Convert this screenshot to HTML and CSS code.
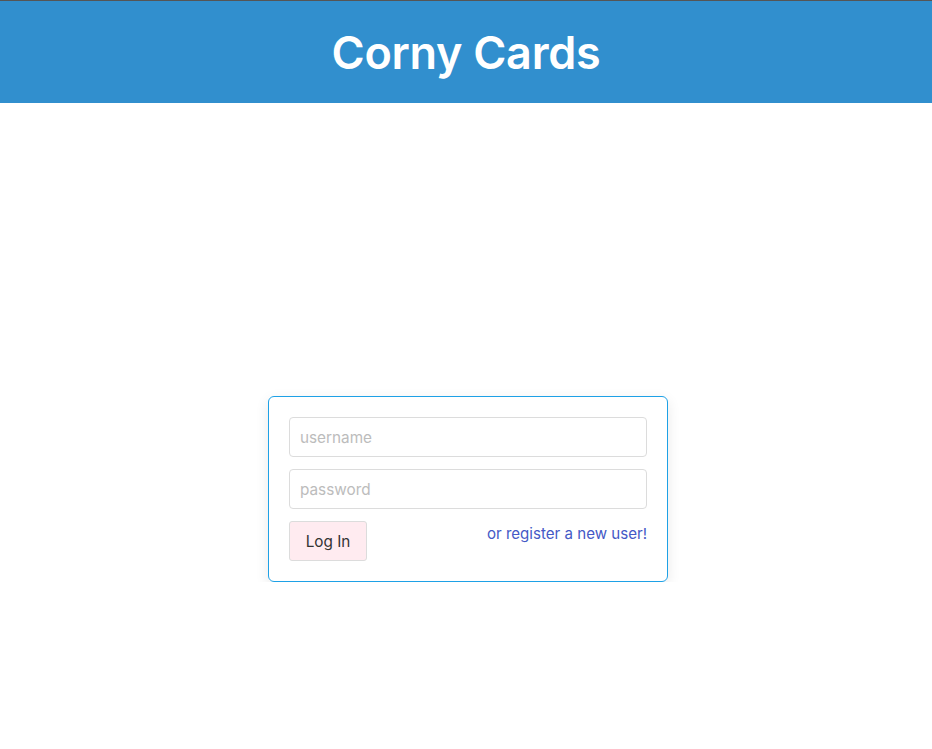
FILE: index.html
```html
<!DOCTYPE html>
<html>
<head>
<meta charset="utf-8">
<link rel="stylesheet" href="styles.css">
</head>
<body>
<header class="header">
  <h1 class="title">Corny Cards</h1>
</header>
<main class="main">
  <form class="card">
    <input class="field" type="text" placeholder="username">
    <input class="field" type="password" placeholder="password">
    <div class="actions">
      <button class="btn" type="button">Log In</button>
      <a class="link" href="#">or register a new user!</a>
    </div>
  </form>
</main>
</body>
</html>
```
FILE: styles.css
```css
* { box-sizing: border-box; }
html, body { margin: 0; padding: 0; background: #fff; }
body { font-family: Inter, Roboto, sans-serif; font-size: 16px; }
.header {
  background: #318fce;
  border-top: 1px solid #555;
  height: 103px;
  display: flex;
  align-items: center;
  justify-content: center;
}
.title {
  margin: 0;
  color: #fff;
  font-family: Inter, sans-serif;
  font-weight: 600;
  font-size: 45px;
  letter-spacing: -0.3px;
}
.main {
  display: flex;
  justify-content: center;
  padding-top: 293px;
  padding-left: 4px;
}
.card {
  width: 400px;
  border: 1px solid #1ea1e6;
  border-radius: 6px;
  padding: 20px;
  box-shadow: 0 4px 14px rgba(0,0,0,0.09);
  display: flex;
  flex-direction: column;
  gap: 12px;
}
.field {
  height: 40px;
  border: 1px solid #dcdcdc;
  border-radius: 4px;
  padding: 0 10px;
  font-family: Inter, sans-serif;
  font-size: 15.3px;
  color: #333;
  outline: none;
}
.field::placeholder { color: #bcbcbc; }
.actions {
  display: flex;
  justify-content: space-between;
  align-items: flex-start;
}
.btn {
  height: 40px;
  width: 78px;
  background: #ffebf0;
  border: 1px solid #dcdcdc;
  border-radius: 3px;
  font-family: Inter, sans-serif;
  font-size: 15.3px;
  color: #333;
  padding: 0;
}
.link {
  color: #4459c6;
  text-decoration: none;
  font-size: 15.1px;
  line-height: 24px;
  padding-top: 1px;
}
```
